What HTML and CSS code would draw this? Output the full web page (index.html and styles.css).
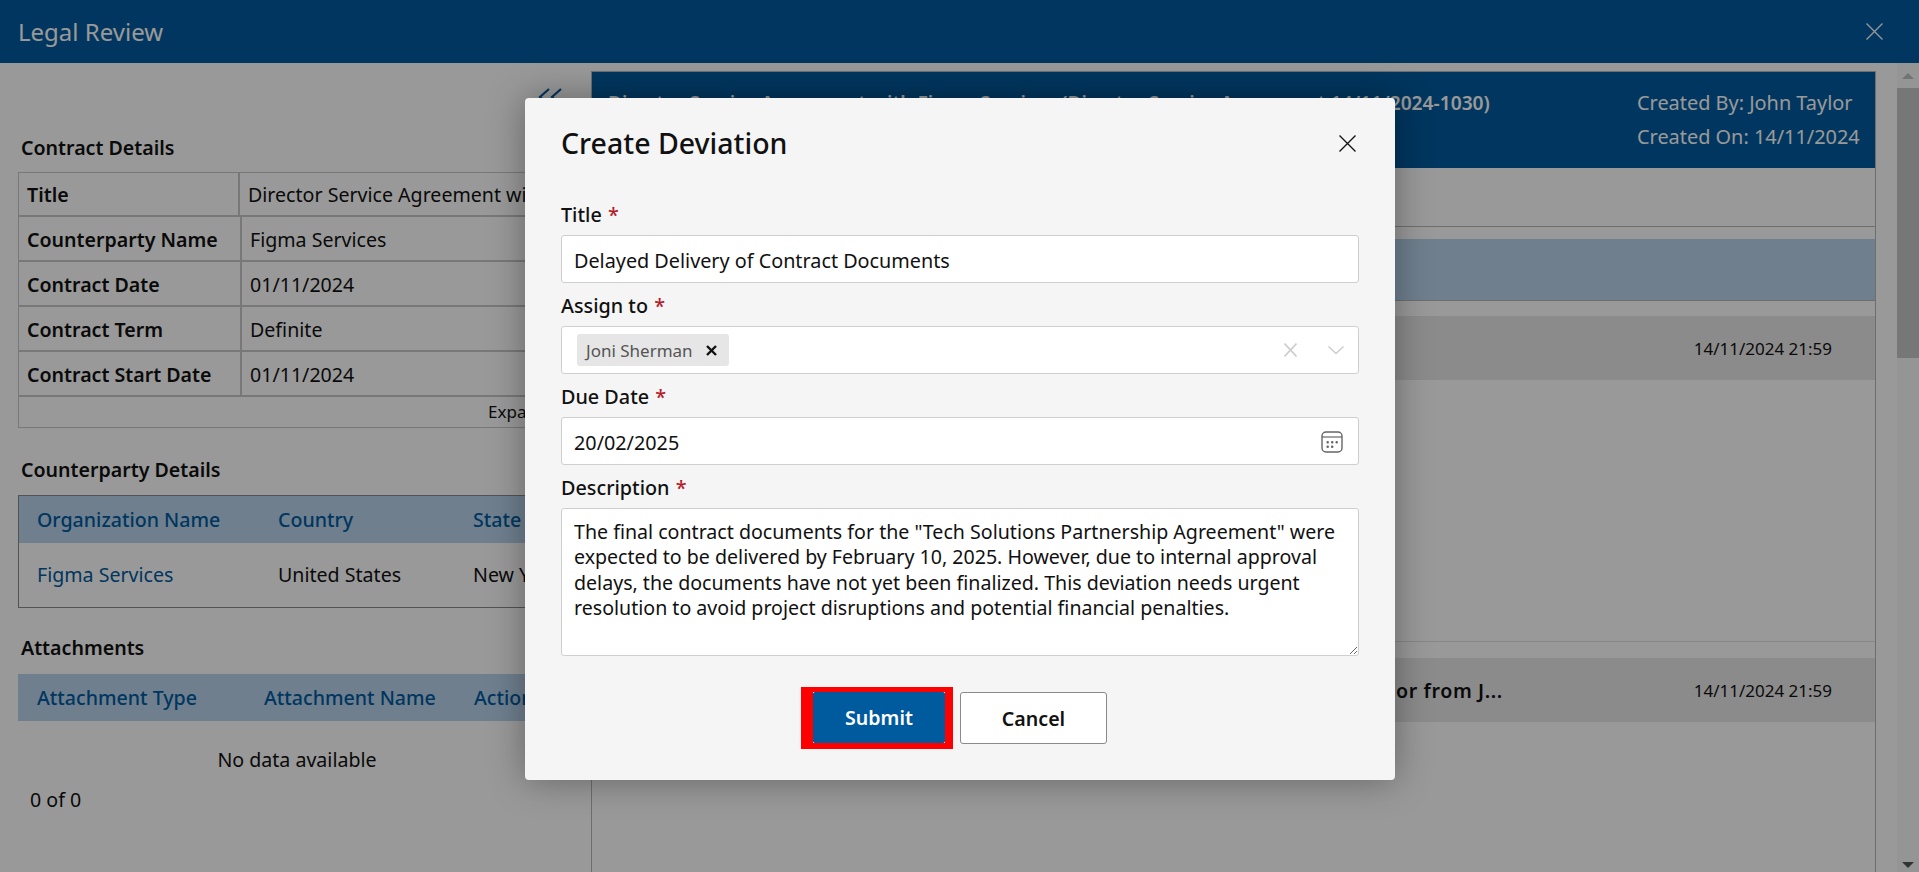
FILE: index.html
```html
<!DOCTYPE html>
<html lang="en">
<head>
    <meta charset="UTF-8">
    <meta name="viewport" content="width=device-width, initial-scale=1.0">
    <title>Legal Review</title>
    <link rel="stylesheet" href="styles.css">
</head>
<body>
    <div class="page">
        <header class="top-bar">
            <span class="top-title">Legal Review</span>
            <svg class="top-close" width="17" height="17" viewBox="0 0 17 17"><path d="M0.5 0.5L16.5 16.5M16.5 0.5L0.5 16.5" stroke="#fff" stroke-width="1.3" fill="none"/></svg>
        </header>

        <div class="main">
            <aside class="left-panel">
                <div class="collapse-row">
                    <svg width="24" height="18" viewBox="0 0 24 18"><path d="M11 1L2 9L11 17M23 1L14 9L23 17" stroke="#005a9e" stroke-width="2.2" fill="none"/></svg>
                </div>

                <h2 class="section-title first">Contract Details</h2>
                <div class="details">
                    <div class="detail-row title-row"><div class="detail-label">Title</div><div class="detail-value">Director Service Agreement with</div></div>
                    <div class="detail-row"><div class="detail-label">Counterparty Name</div><div class="detail-value">Figma Services</div></div>
                    <div class="detail-row"><div class="detail-label">Contract Date</div><div class="detail-value">01/11/2024</div></div>
                    <div class="detail-row"><div class="detail-label">Contract Term</div><div class="detail-value">Definite</div></div>
                    <div class="detail-row"><div class="detail-label">Contract Start Date</div><div class="detail-value">01/11/2024</div></div>
                    <div class="expand-row">Expand</div>
                </div>

                <h2 class="section-title counterparty">Counterparty Details</h2>
                <div class="grid-box">
                    <div class="grid-head org-cols"><span>Organization Name</span><span>Country</span><span>State</span></div>
                    <div class="grid-row org-cols"><a class="link">Figma Services</a><span>United States</span><span>New York</span></div>
                </div>

                <h2 class="section-title attachments">Attachments</h2>
                <div class="grid-head attach-cols"><span>Attachment Type</span><span>Attachment Name</span><span>Action</span></div>
                <div class="no-data">No data available</div>
                <div class="pager">0 of 0</div>
            </aside>

            <section class="right-panel">
                <div class="panel-header">
                    <div class="panel-name">Director Service Agreement with Figma Services (Director Service Agreement 14/11/2024-1030)</div>
                    <div class="panel-meta">
                        <div>Created By: John Taylor</div>
                        <div>Created On: 14/11/2024</div>
                    </div>
                </div>
                <div class="panel-tabs"></div>
                <div class="panel-body">
                    <div class="band"></div>
                    <div class="activity-row"><span class="activity-text"></span><span class="activity-date">14/11/2024 21:59</span></div>
                    <div class="activity-gap"></div>
                    <div class="activity-row second"><span class="activity-text">Contract assigned to John Taylor from J...</span><span class="activity-date">14/11/2024 21:59</span></div>
                </div>
            </section>

            <div class="scrollbar">
                <span class="arrow-up"></span>
                <span class="thumb"></span>
                <span class="arrow-down"></span>
            </div>
        </div>
    </div>

    <div class="overlay"></div>

    <div class="modal">
        <div class="modal-head">
            <h1>Create Deviation</h1>
            <svg width="17" height="17" viewBox="0 0 17 17"><path d="M0.5 0.5L16.5 16.5M16.5 0.5L0.5 16.5" stroke="#111" stroke-width="1.3" fill="none"/></svg>
        </div>

        <div class="form-label">Title <span class="req">*</span></div>
        <div class="field">Delayed Delivery of Contract Documents</div>

        <div class="form-label">Assign to <span class="req">*</span></div>
        <div class="field select-field">
            <span class="chip">Joni Sherman
                <svg width="11" height="11" viewBox="0 0 11 11"><path d="M1 1L10 10M10 1L1 10" stroke="#111" stroke-width="2.4" fill="none"/></svg>
            </span>
            <svg class="clear-icon" width="13" height="14" viewBox="0 0 13 14"><path d="M0.5 0.5L12.5 13.5M12.5 0.5L0.5 13.5" stroke="#ccc" stroke-width="1.6" fill="none"/></svg>
            <svg class="chevron-icon" width="16" height="8" viewBox="0 0 16 8"><path d="M0.5 0.5L8 7.5L15.5 0.5" stroke="#ccc" stroke-width="1.4" fill="none"/></svg>
        </div>

        <div class="form-label">Due Date <span class="req">*</span></div>
        <div class="field date-field">
            <span>20/02/2025</span>
            <svg width="22" height="22" viewBox="0 0 22 22">
                <rect x="1" y="1" width="20" height="20" rx="4" stroke="#666" stroke-width="1.4" fill="none"/>
                <path d="M1 6H21" stroke="#666" stroke-width="1.2"/>
                <g fill="#666"><rect x="5.5" y="10" width="2.4" height="2.4" rx="1"/><rect x="10" y="10" width="2.4" height="2.4" rx="1"/><rect x="14.5" y="10" width="2.4" height="2.4" rx="1"/><rect x="5.5" y="14.5" width="2.4" height="2.4" rx="1"/><rect x="10" y="14.5" width="2.4" height="2.4" rx="1"/></g>
            </svg>
        </div>

        <div class="form-label">Description <span class="req">*</span></div>
        <textarea class="field area" readonly>The final contract documents for the "Tech Solutions Partnership Agreement" were expected to be delivered by February 10, 2025. However, due to internal approval delays, the documents have not yet been finalized. This deviation needs urgent resolution to avoid project disruptions and potential financial penalties.</textarea>

        <div class="modal-actions">
            <div class="highlight"><button class="btn primary">Submit</button></div>
            <button class="btn">Cancel</button>
        </div>
    </div>
</body>
</html>
```

FILE: styles.css
```css
* {
    box-sizing: border-box;
}
html, body {
    height: 100%;
    margin: 0;
    overflow: hidden;
}
body {
    font-family: "Noto Sans", "Open Sans", sans-serif;
    font-size: 19.6px;
    color: #111;
    background-color: #fff;
    position: relative;
}
.page {
    height: 872px;
    display: flex;
    flex-direction: column;
}
.top-bar {
    height: 63px;
    flex: none;
    background-color: #005a9e;
    color: #fff;
    display: flex;
    align-items: center;
    justify-content: space-between;
    padding: 0 36px 0 18px;
}
.top-title {
    font-size: 24px;
}
.main {
    flex: 1;
    display: flex;
    min-height: 0;
}

/* left side */
.left-panel {
    width: 591px;
    flex: none;
    padding: 0 15px 0 18px;
}
.collapse-row {
    height: 46px;
    padding: 22px 0 0 520px;
}
.section-title {
    margin: 0 0 0 3px;
    font-size: 19.6px;
    line-height: 24px;
    font-weight: 600;
}
.section-title.first {
    margin-top: 27px;
    margin-bottom: 12px;
}
.section-title.counterparty {
    margin-top: 30px;
    margin-bottom: 13px;
}
.section-title.attachments {
    margin-top: 28px;
    margin-bottom: 14px;
}
.details {
    border: 1px solid #c9c9c9;
}
.detail-row {
    display: flex;
    height: 45px;
    padding-top: 0;
    border-bottom: 2px solid #c9c9c9;
    align-items: stretch;
}
.detail-label {
    width: 223px;
    flex: none;
    padding: 2px 0 0 8px;
    font-weight: 600;
    display: flex;
    align-items: center;
    border-right: 2px solid #c9c9c9;
    white-space: nowrap;
}
.title-row {
    height: 44px;
}
.title-row .detail-label {
    width: 221px;
    padding-top: 0;
}
.detail-value {
    padding: 2px 0 0 8px;
    display: flex;
    align-items: center;
    white-space: nowrap;
}
.title-row .detail-value {
    padding-top: 0;
}
.expand-row {
    height: 30px;
    line-height: 30px;
    font-size: 17px;
    padding-left: 469px;
}
.grid-box {
    border: 1px solid #8a8a8a;
}
.grid-head, .grid-row {
    display: grid;
    align-items: center;
    white-space: nowrap;
}
.grid-head {
    height: 47px;
    background-color: #b9d4ed;
    color: #005a9e;
    font-weight: 500;
}
.grid-row {
    height: 64px;
    padding-bottom: 2px;
}
.org-cols {
    grid-template-columns: 241px 195px 1fr;
    padding-left: 18px;
}
.attach-cols {
    grid-template-columns: 227px 210px 1fr;
    padding-left: 19px;
}
.link {
    color: #005a9e;
}
.no-data {
    text-align: center;
    margin-top: 26px;
    line-height: 26px;
}
.pager {
    margin: 14px 0 0 12px;
    line-height: 26px;
}

/* right side */
.right-panel {
    flex: 1;
    margin: 8px 21px 0 0;
    border-left: 1px solid #b8b8b8;
    border-right: 1px solid #b8b8b8;
    border-top: 1px solid #b8b8b8;
    min-width: 0;
}
.panel-header {
    height: 96px;
    background-color: #005a9e;
    color: #fff;
    display: flex;
    justify-content: space-between;
    padding: 18px 0 0 16px;
}
.panel-name {
    font-weight: 600;
    font-size: 19.2px;
    line-height: 26px;
    white-space: nowrap;
}
.panel-meta {
    width: 238px;
    font-size: 19.9px;
    line-height: 34px;
    margin-top: -4px;
    white-space: nowrap;
}
.panel-tabs {
    height: 59px;
    border-bottom: 1px solid #b8b8b8;
}
.panel-body {
    padding-top: 12px;
}
.band {
    height: 62px;
    background-color: #b9d4ed;
    border-bottom: 1px solid #b8b8b8;
    margin-bottom: 15px;
}
.activity-row {
    height: 64px;
    background-color: #e8e8e8;
    display: flex;
    justify-content: space-between;
    align-items: center;
    padding-right: 43px;
}
.activity-gap {
    height: 262px;
    border-bottom: 1px solid #e0e0e0;
    margin-bottom: 16px;
}
.activity-text {
    font-weight: 600;
    letter-spacing: 0.6px;
    margin-left: 498px;
    white-space: nowrap;
}
.activity-date {
    font-size: 17px;
    white-space: nowrap;
}
.scrollbar {
    width: 22px;
    flex: none;
    background-color: #f8f8f8;
    display: flex;
    flex-direction: column;
    align-items: center;
}
.thumb {
    width: 100%;
    height: 270px;
    background-color: #c6c6c6;
    margin-top: 9px;
}
.arrow-up, .arrow-down {
    width: 0;
    height: 0;
    border-left: 6px solid transparent;
    border-right: 6px solid transparent;
}
.arrow-up {
    border-bottom: 6px solid #c0c0c0;
    margin-top: 10px;
}
.arrow-down {
    border-top: 6px solid #555;
    margin-top: auto;
    margin-bottom: 4px;
}

/* dim layer and dialog */
.overlay {
    position: absolute;
    inset: 0;
    background-color: rgba(0, 0, 0, 0.4);
}
.modal {
    position: absolute;
    left: 525px;
    top: 98px;
    width: 870px;
    height: 682px;
    background-color: #f5f5f5;
    border-radius: 4px;
    box-shadow: 0 0 36px rgba(0, 0, 0, 0.35);
    padding: 0 36px;
}
.modal-head {
    height: 88px;
    display: flex;
    justify-content: space-between;
    align-items: center;
    padding-right: 3px;
    padding-top: 2px;
}
.modal-head h1 {
    margin: 0;
    font-size: 28.5px;
    font-weight: 500;
}
.form-label {
    height: 25px;
    margin-top: 10px;
    margin-bottom: 8px;
    line-height: 25px;
    font-weight: 500;
    font-size: 19.8px;
}
.modal-head + .form-label {
    margin-top: 16px;
}
.req {
    color: #b3202a;
    margin-left: 1px;
}
.field {
    height: 48px;
    width: 798px;
    background-color: #fff;
    border: 1px solid #cfcfcf;
    border-radius: 3px;
    padding: 2px 12px 0;
    display: flex;
    align-items: center;
    font-size: 19.8px;
    font-family: inherit;
    color: #111;
}
.select-field {
    padding: 0 14px 0 15px;
}
.chip {
    height: 32px;
    width: 152px;
    background-color: #e6e6e6;
    border-radius: 3px;
    padding: 1px 9px 0;
    display: flex;
    align-items: center;
    justify-content: space-between;
    color: #555;
    font-size: 17px;
    margin-right: auto;
    white-space: nowrap;
}
.chip svg {
    margin-right: 3px;
}
.clear-icon {
    margin-right: 31px;
}
.date-field {
    justify-content: space-between;
    padding-right: 15px;
}
.area {
    height: 148px;
    display: block;
    padding: 10px 12px;
    font-size: 19.6px;
    line-height: 25.4px;
    resize: both;
    outline: none;
}
.modal-actions {
    display: flex;
    align-items: center;
    gap: 7px;
    margin-top: 31px;
    padding-left: 240px;
}
.highlight {
    border-style: solid;
    border-color: #ff0000;
    border-width: 5px 8px 6px 12px;
    width: 152px;
    height: 62px;
}
.btn {
    width: 147px;
    height: 52px;
    background-color: #fff;
    border: 1px solid #8a8a8a;
    border-radius: 3px;
    font-family: inherit;
    font-size: 19.6px;
    font-weight: 600;
    color: #111;
}
.btn.primary {
    display: block;
    width: 132px;
    height: 51px;
    background-color: #005a9e;
    border-color: #005a9e;
    border-radius: 2px;
    color: #fff;
}
```
